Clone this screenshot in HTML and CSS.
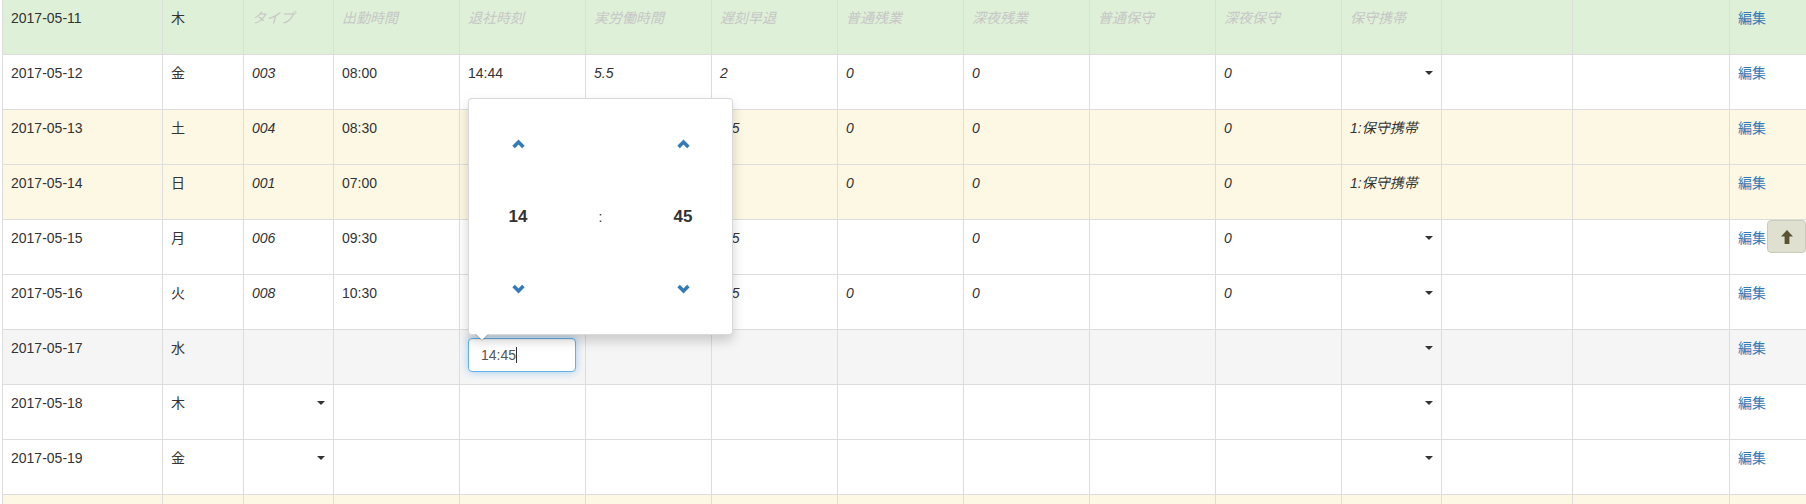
FILE: index.html
```html
<!DOCTYPE html>
<html lang="ja">
<head>
<meta charset="utf-8">
<title>勤務表</title>
<link rel="stylesheet" href="styles.css">
</head>
<body>
<div class="page">
  <table class="grid">
    <colgroup>
      <col class="w160"><col class="w81"><col class="w90">
      <col class="w126"><col class="w126"><col class="w126"><col class="w126">
      <col class="w126"><col class="w126"><col class="w126"><col class="w126">
      <col class="w100"><col class="w131"><col class="w157"><col class="w100">
    </colgroup>
    <tbody>
      <tr class="success">
        <td>2017-05-11</td><td>木</td>
        <td class="ph">タイプ</td><td class="ph">出勤時間</td><td class="ph">退社時刻</td>
        <td class="ph">実労働時間</td><td class="ph">遅刻早退</td><td class="ph">普通残業</td>
        <td class="ph">深夜残業</td><td class="ph">普通保守</td><td class="ph">深夜保守</td>
        <td class="ph">保守携帯</td><td></td><td></td><td><a class="link">編集</a></td>
      </tr>
      <tr>
        <td>2017-05-12</td><td>金</td><td class="it">003</td><td>08:00</td><td>14:44</td>
        <td class="it">5.5</td><td class="it">2</td><td class="it">0</td><td class="it">0</td>
        <td></td><td class="it">0</td>
        <td><div class="sel"><span class="caret"></span></div></td>
        <td></td><td></td><td><a class="link">編集</a></td>
      </tr>
      <tr class="warning">
        <td>2017-05-13</td><td>土</td><td class="it">004</td><td>08:30</td><td>17:30</td>
        <td class="it">8</td><td class="it">1.5</td><td class="it">0</td><td class="it">0</td>
        <td></td><td class="it">0</td><td class="it">1:保守携帯</td>
        <td></td><td></td><td><a class="link">編集</a></td>
      </tr>
      <tr class="warning">
        <td>2017-05-14</td><td>日</td><td class="it">001</td><td>07:00</td><td>16:00</td>
        <td class="it">8</td><td></td><td class="it">0</td><td class="it">0</td>
        <td></td><td class="it">0</td><td class="it">1:保守携帯</td>
        <td></td><td></td><td><a class="link">編集</a></td>
      </tr>
      <tr>
        <td>2017-05-15</td><td>月</td><td class="it">006</td><td>09:30</td><td>18:00</td>
        <td class="it">7.5</td><td class="it">1.5</td><td></td><td class="it">0</td>
        <td></td><td class="it">0</td>
        <td><div class="sel"><span class="caret"></span></div></td>
        <td></td><td></td><td><a class="link">編集</a></td>
      </tr>
      <tr>
        <td>2017-05-16</td><td>火</td><td class="it">008</td><td>10:30</td><td>19:00</td>
        <td class="it">7.5</td><td class="it">1.5</td><td class="it">0</td><td class="it">0</td>
        <td></td><td class="it">0</td>
        <td><div class="sel"><span class="caret"></span></div></td>
        <td></td><td></td><td><a class="link">編集</a></td>
      </tr>
      <tr class="active">
        <td>2017-05-17</td><td>水</td><td></td><td></td>
        <td>
          <div class="tp-anchor">
            <div class="tp-input">14:45<span class="cursor"></span></div>
            <div class="tp-widget">
              <div class="tp-grid">
                <a class="tp-btn"><svg width="13" height="10" viewBox="0 0 13 10"><path d="M1.6 7.9 L6.5 3 L11.4 7.9" fill="none" stroke="#337ab7" stroke-width="3.6"/></svg></a>
                <span></span>
                <a class="tp-btn"><svg width="13" height="10" viewBox="0 0 13 10"><path d="M1.6 7.9 L6.5 3 L11.4 7.9" fill="none" stroke="#337ab7" stroke-width="3.6"/></svg></a>
                <span class="tp-val">14</span>
                <span class="tp-sep">:</span>
                <span class="tp-val">45</span>
                <a class="tp-btn"><svg width="13" height="10" viewBox="0 0 13 10"><path d="M1.6 2.1 L6.5 7 L11.4 2.1" fill="none" stroke="#337ab7" stroke-width="3.6"/></svg></a>
                <span></span>
                <a class="tp-btn"><svg width="13" height="10" viewBox="0 0 13 10"><path d="M1.6 2.1 L6.5 7 L11.4 2.1" fill="none" stroke="#337ab7" stroke-width="3.6"/></svg></a>
              </div>
            </div>
          </div>
        </td>
        <td></td><td></td><td></td><td></td><td></td><td></td>
        <td><div class="sel"><span class="caret"></span></div></td>
        <td></td><td></td><td><a class="link">編集</a></td>
      </tr>
      <tr>
        <td>2017-05-18</td><td>木</td>
        <td><div class="sel"><span class="caret"></span></div></td>
        <td></td><td></td><td></td><td></td><td></td><td></td><td></td><td></td>
        <td><div class="sel"><span class="caret"></span></div></td>
        <td></td><td></td><td><a class="link">編集</a></td>
      </tr>
      <tr>
        <td>2017-05-19</td><td>金</td>
        <td><div class="sel"><span class="caret"></span></div></td>
        <td></td><td></td><td></td><td></td><td></td><td></td><td></td><td></td>
        <td><div class="sel"><span class="caret"></span></div></td>
        <td></td><td></td><td><a class="link">編集</a></td>
      </tr>
      <tr class="warning">
        <td></td><td></td><td></td><td></td><td></td><td></td><td></td><td></td>
        <td></td><td></td><td></td><td></td><td></td><td></td><td></td>
      </tr>
    </tbody>
  </table>
</div>
<a class="to-top"><svg width="12" height="14" viewBox="0 0 12 14"><path d="M6 0 L12 6.4 H8.4 V14 H3.6 V6.4 H0 Z" fill="#5a5332"/></svg></a>
</body>
</html>
```
FILE: styles.css
```css
html, body {
  margin: 0;
  padding: 0;
  background: #fff;
  overflow: hidden;
}
body {
  font-family: "Liberation Sans", "Noto Sans CJK JP", sans-serif;
  font-size: 14px;
  line-height: 20px;
  color: #333;
}
.page {
  width: 1806px;
  height: 504px;
  overflow: hidden;
  padding-left: 2px;
  box-sizing: border-box;
}
.grid {
  border-collapse: collapse;
  table-layout: fixed;
  width: 1827px;
  margin-top: -1px;
}
.w160 { width: 160px; }
.w81 { width: 81px; }
.w90 { width: 90px; }
.w126 { width: 126px; }
.w100 { width: 100px; }
.w131 { width: 131px; }
.w157 { width: 157px; }
.grid td {
  border: 1px solid #ddd;
  padding: 8px;
  height: 38px;
  vertical-align: top;
  white-space: nowrap;
  overflow: visible;
}
.grid tr.success td { background: #dff0d8; }
.grid tr.warning td { background: #fcf8e3; }
.grid tr.active td { background: #f5f5f5; }
.ph {
  font-style: italic;
  color: #c6c6c6;
}
.it { font-style: italic; }
.link {
  color: #337ab7;
  text-decoration: none;
}
.sel {
  display: flex;
  justify-content: flex-end;
  align-items: center;
  height: 20px;
}
.caret {
  width: 0;
  height: 0;
  border-top: 4px solid #333;
  border-left: 4px solid transparent;
  border-right: 4px solid transparent;
}
.tp-anchor {
  position: relative;
}
.tp-input {
  width: 108px;
  height: 34px;
  box-sizing: border-box;
  padding: 6px 12px;
  border: 1px solid #66afe9;
  border-radius: 4px;
  background: #fff;
  color: #555;
  box-shadow: inset 0 1px 1px rgba(0,0,0,.075), 0 0 8px rgba(102,175,233,.6);
}
.cursor {
  display: inline-block;
  width: 1px;
  height: 16px;
  background: #333;
  vertical-align: -3px;
}
.tp-widget {
  position: absolute;
  left: 0;
  bottom: calc(100% + 3px);
  width: 265px;
  height: 237px;
  box-sizing: border-box;
  background: #fff;
  border: 1px solid rgba(0,0,0,.15);
  border-radius: 4px;
  box-shadow: 0 6px 12px rgba(0,0,0,.175);
  z-index: 10;
}
.tp-widget::before {
  content: "";
  position: absolute;
  left: 6px;
  bottom: -7px;
  border-top: 7px solid rgba(0,0,0,.2);
  border-left: 7px solid transparent;
  border-right: 7px solid transparent;
}
.tp-widget::after {
  content: "";
  position: absolute;
  left: 7px;
  bottom: -6px;
  border-top: 6px solid #fff;
  border-left: 6px solid transparent;
  border-right: 6px solid transparent;
}
.tp-grid {
  display: grid;
  grid-template-columns: 98px 67px 98px;
  grid-template-rows: 72px 73px 72px;
  padding: 9px 0;
  align-items: center;
  justify-items: center;
}
.tp-btn {
  display: flex;
  line-height: 0;
}
.tp-val {
  font-weight: bold;
  font-size: 17px;
  color: #333;
}
.tp-sep {
  color: #333;
}
.to-top {
  position: fixed;
  top: 220px;
  right: 0;
  width: 39px;
  height: 33px;
  box-sizing: border-box;
  background: #e0e0d1;
  border: 1px solid #cbcbb9;
  border-radius: 4px;
  display: flex;
  align-items: center;
  justify-content: center;
  z-index: 20;
}
```
